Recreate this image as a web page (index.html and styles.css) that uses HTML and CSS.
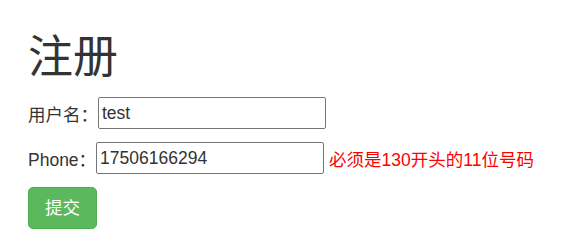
FILE: index.html
```html
<!DOCTYPE html>
<html lang="zh-CN">
<head>
<meta charset="utf-8">
<title>注册</title>
<link rel="stylesheet" href="styles.css">
</head>
<body>
<div class="page">
  <h1 class="title">注册</h1>
  <form class="form">
    <div class="row">
      <label class="label" for="username">用户名：</label>
      <input class="field" id="username" type="text" value="test">
    </div>
    <div class="row">
      <label class="label" for="phone">Phone：</label>
      <input class="field field-phone" id="phone" type="text" value="17506166294">
      <span class="error">必须是130开头的11位号码</span>
    </div>
    <button class="btn" type="button">提交</button>
  </form>
</div>
</body>
</html>
```

FILE: styles.css
```css
html, body {
  margin: 0;
  padding: 0;
  background: #fff;
}
body {
  font-family: "Liberation Sans", Arial, "Noto Sans CJK SC", sans-serif;
  font-size: 17.5px;
  color: #333;
}
.page {
  padding: 33px 0 0 28px;
}
.title {
  margin: 0 0 14px 0;
  font-size: 45px;
  line-height: 50px;
  font-weight: 400;
  color: #333;
}
.form {
  display: flex;
  flex-direction: column;
  align-items: flex-start;
  gap: 13px;
}
.row {
  display: flex;
  align-items: center;
  height: 32px;
}
.label {
  white-space: nowrap;
}
.field {
  box-sizing: border-box;
  width: 228px;
  height: 32px;
  margin: 0;
  padding: 0 3px;
  border: 1px solid #767676;
  border-radius: 2px;
  font-family: inherit;
  font-size: 17.5px;
  color: #333;
  background: #fff;
}
.error {
  margin-left: 5px;
  color: #ff0000;
  white-space: nowrap;
}
.btn {
  box-sizing: border-box;
  height: 42px;
  padding: 0 16px;
  margin: 0;
  border: 1px solid #4cae4c;
  border-radius: 5px;
  background: #5cb85c;
  color: #fff;
  font-family: inherit;
  font-size: 17.5px;
  line-height: 25px;
  cursor: pointer;
}
```
